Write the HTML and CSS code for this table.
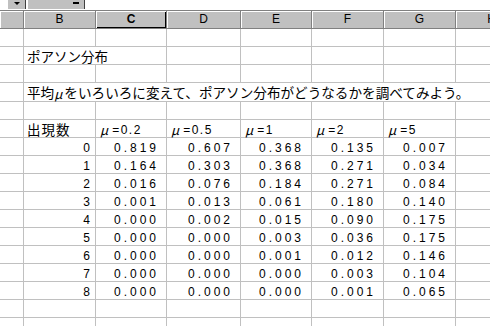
FILE: index.html
```html
<!DOCTYPE html>
<html lang="ja">

<head>
  <meta charset="UTF-8">
  <meta name="viewport" content="width=device-width, initial-scale=1.0">
  <title>ポアソン分布</title>
  <link rel="stylesheet" href="styles.css">
</head>
<body>
  <!-- 数式バーの下端 -->
  <div class="toolbar">
    <span class="drop"><i class="arrow"></i></span>
    <span class="field"><i class="dash"></i></span>
  </div>

  <!-- 列見出し -->
  <div class="cols">
    <div class="colhead"></div>
    <div class="colhead">B</div>
    <div class="colhead active">C</div>
    <div class="colhead">D</div>
    <div class="colhead">E</div>
    <div class="colhead">F</div>
    <div class="colhead">G</div>
    <div class="colhead">H</div>
  </div>

  <div id="sheet" class="sheet">
    <!-- 1行目 -->
    <div class="cell"></div><div class="cell"></div><div class="cell"></div><div class="cell"></div>
    <div class="cell"></div><div class="cell"></div><div class="cell"></div><div class="cell"></div>
    <!-- 2行目 : タイトル -->
    <div class="cell"></div>
    <div class="cell text span-bc">ポアソン分布</div>
    <div class="cell"></div><div class="cell"></div><div class="cell"></div><div class="cell"></div><div class="cell"></div>
    <!-- 3行目 -->
    <div class="cell"></div><div class="cell"></div><div class="cell"></div><div class="cell"></div>
    <div class="cell"></div><div class="cell"></div><div class="cell"></div><div class="cell"></div>
    <!-- 4行目 : 説明 -->
    <div class="cell"></div>
    <div class="cell text wide span-all">平均<span class="mu">μ</span>をいろいろに変えて、ポアソン分布がどうなるかを調べてみよう。</div>
    <!-- 5行目 -->
    <div class="cell"></div><div class="cell"></div><div class="cell"></div><div class="cell"></div>
    <div class="cell"></div><div class="cell"></div><div class="cell"></div><div class="cell"></div>
  </div>

  <script>
    const $sheet = document.getElementById('sheet');
    const mus = [0.2, 0.5, 1, 2, 5];

    // セルを1つ作って追加する
    function addCell(text, cls) {
      const $cell = document.createElement('div');
      $cell.className = 'cell' + (cls ? ' ' + cls : '');
      $cell.innerHTML = text || '';
      $sheet.appendChild($cell);
    }

    // 見出し行
    addCell('');
    addCell('出現数', 'text label');
    mus.forEach(mu => addCell('<span class="mu">μ</span>=' + mu, 'head'));
    addCell('');

    // P(k) = e^-μ * μ^k / k!
    let fact = 1;
    for (let k = 0; k <= 8; k++) {
      if (k > 0) fact *= k;
      addCell('');
      addCell(String(k), 'num count');
      mus.forEach(mu => {
        const p = Math.exp(-mu) * Math.pow(mu, k) / fact;
        addCell(p.toFixed(3), 'num');
      });
      addCell('');
    }

    // 下の空き行
    for (let i = 0; i < 16; i++) addCell('');
  </script>
</body>
</html>
```

FILE: styles.css
```css
body {
  margin: 0;
  width: 490px;
  height: 326px;
  overflow: hidden;
  background: #fff;
}

.toolbar {
  height: 10px;
  display: flex;
  gap: 2px;
  padding-left: 8px;
}

.drop,
.field {
  position: relative;
  height: 9px;
  background: #c0c0c0;
  border-right: 1px solid #404040;
  box-sizing: border-box;
}

.drop {
  width: 18px;
}

.field {
  width: 57px;
}

.arrow {
  position: absolute;
  left: 6px;
  top: 2px;
  border-left: 3px solid transparent;
  border-right: 3px solid transparent;
  border-top: 3px solid #000;
}

.dash {
  position: absolute;
  left: 45px;
  top: 2px;
  width: 6px;
  height: 2px;
  background: #000;
}

.cols,
.sheet {
  display: grid;
  grid-template-columns: 23px 71px 70px 73px 70px 71px 71px 71px;
  column-gap: 1px;
}

.cols {
  height: 17px;
  background: #808080;
  border-top: 1px solid #808080;
  border-bottom: 1px solid #808080;
}

.colhead {
  background: #c0c0c0;
  box-shadow: inset 1px 1px 0 #fff;
  font-family: "Liberation Sans", Arial, sans-serif;
  font-size: 12px;
  line-height: 17px;
  text-align: center;
  color: #000;
}

.colhead.active {
  font-weight: bold;
  box-shadow: inset 1px 1px 0 #fff, inset -1px -1px 0 #000;
}

.sheet {
  grid-template-rows: 17px 17px 17px 18px;
  grid-auto-rows: 17px;
  row-gap: 1px;
  background: #c0c0c0;
}

.cell {
  background: #fff;
  display: flex;
  align-items: flex-end;
  white-space: nowrap;
  padding: 0 3px 1px;
  line-height: 1;
  color: #000;
  font-family: "Noto Sans CJK JP", sans-serif;
  font-size: 13.5px;
  min-width: 0;
}

.wide {
  font-size: 13.6px;
}

.label {
  letter-spacing: 1px;
}

.span-bc {
  grid-column: 2 / 4;
}

.span-all {
  grid-column: 2 / -1;
}

.mu {
  font-family: "Noto Sans CJK JP", sans-serif;
  font-size: 13px;
  font-style: italic;
  margin-right: 2px;
}

.head {
  font-family: "Liberation Sans", Arial, sans-serif;
  font-size: 12px;
  letter-spacing: 1.5px;
  padding-left: 4px;
}

.head .mu {
  letter-spacing: 0;
  margin-right: 4px;
}

.num {
  justify-content: flex-end;
  font-family: "Liberation Sans", Arial, sans-serif;
  font-size: 12px;
  letter-spacing: 3px;
  padding-right: 7px;
}

.num.count {
  padding-right: 2px;
}
```
